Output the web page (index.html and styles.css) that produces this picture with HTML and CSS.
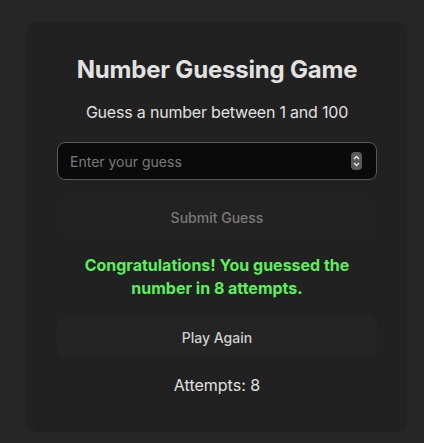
FILE: index.html
```html
<!DOCTYPE html>
<html lang="en">
<head>
<meta charset="utf-8">
<title>Number Guessing Game</title>
<link rel="stylesheet" href="styles.css">
</head>
<body>
<main class="card">
  <h1 class="title">Number Guessing Game</h1>
  <p class="subtitle">Guess a number between 1 and 100</p>
  <div class="field">
    <span class="placeholder">Enter your guess</span>
    <span class="spinner">
      <svg width="11" height="18" viewBox="0 0 11 18"><rect x="0" y="0" width="11" height="18" rx="4" fill="#5a5a5a"/><path d="M3 7 L5.5 4.5 L8 7" fill="none" stroke="#eee" stroke-width="1.3"/><path d="M3 11 L5.5 13.5 L8 11" fill="none" stroke="#eee" stroke-width="1.3"/></svg>
    </span>
  </div>
  <button class="btn btn-submit" disabled>Submit Guess</button>
  <p class="message">Congratulations! You guessed the number in 8 attempts.</p>
  <button class="btn btn-again">Play Again</button>
  <p class="attempts">Attempts: 8</p>
</main>
</body>
</html>
```
FILE: styles.css
```css
html, body {
  margin: 0;
  padding: 0;
}
body {
  background: #262626;
  font-family: Inter, "Liberation Sans", sans-serif;
  color: #dddddd;
  padding: 21px 0 13px;
}
.card {
  width: 320px;
  margin: 0 0 0 27px;
  background: #212121;
  border-radius: 10px;
  padding: 34px 30px 35px;
  display: flex;
  flex-direction: column;
  align-items: stretch;
  text-align: center;
}
.title {
  margin: 0;
  font-size: 24px;
  font-weight: 700;
  line-height: 30px;
  color: #e2e2e2;
  letter-spacing: -0.2px;
}
.subtitle {
  margin: 15px 0 0;
  font-size: 16px;
  line-height: 24px;
  color: #e0e0e0;
  letter-spacing: -0.2px;
}
.field {
  margin-top: 18px;
  height: 36px;
  border: 1px solid #5a5a5a;
  border-radius: 8px;
  background: #0a0a0a;
  display: flex;
  align-items: center;
  justify-content: space-between;
  padding: 0 14px 0 12px;
}
.placeholder {
  font-size: 14px;
  color: #7a7a7a;
}
.spinner {
  display: flex;
}
.btn {
  font-family: inherit;
  font-size: 14px;
  font-weight: 500;
  border: none;
  border-radius: 8px;
  height: 40px;
  width: 100%;
}
.btn-submit {
  margin-top: 17px;
  background: #222222;
  color: #7a7a7a;
}
.message {
  margin: 17px 0 0;
  font-size: 16px;
  font-weight: 700;
  line-height: 23px;
  color: #5cf05c;
  padding: 0 20px;
}
.btn-again {
  margin-top: 17px;
  background: #242424;
  color: #d0d0d0;
}
.attempts {
  margin: 16px 0 0;
  font-size: 16px;
  line-height: 24px;
  color: #e0e0e0;
}
```
